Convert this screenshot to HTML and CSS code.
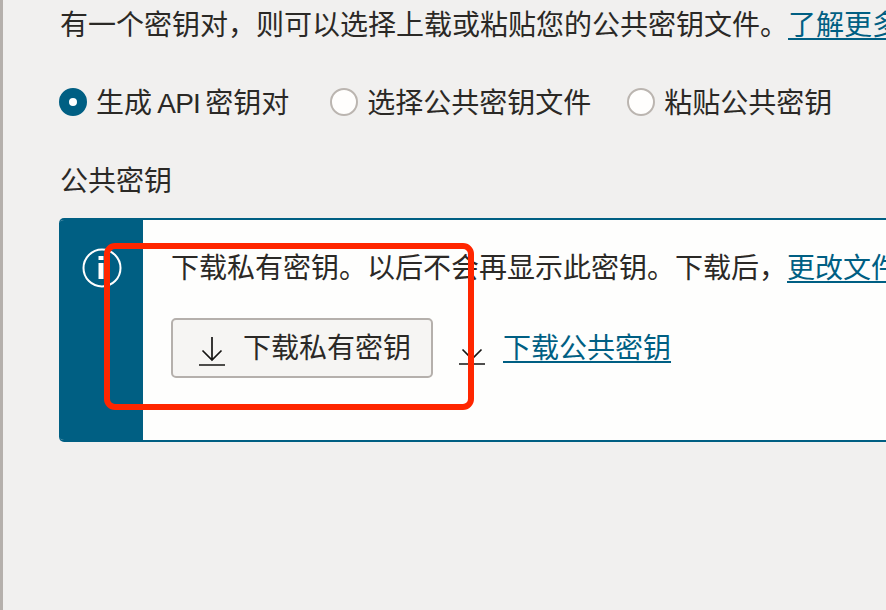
FILE: index.html
```html
<!DOCTYPE html>
<html lang="zh-CN">
<head>
<meta charset="utf-8">
<title>API 密钥</title>
<link rel="stylesheet" href="styles.css">
</head>
<body>
<div class="page">
  <span class="tick tick-a"></span>
  <span class="tick tick-b"></span>
  <main class="content">
    <p class="intro">有一个密钥对，则可以选择上载或粘贴您的公共密钥文件。<a class="link" href="#">了解更多信息</a></p>
    <div class="radios">
      <label class="radio radio-first"><span class="dot dot-on"></span><span class="radio-text">生成 <span class="latin">API</span> 密钥对</span></label>
      <label class="radio"><span class="dot"></span><span class="radio-text">选择公共密钥文件</span></label>
      <label class="radio"><span class="dot"></span><span class="radio-text">粘贴公共密钥</span></label>
    </div>
    <div class="field-label">公共密钥</div>
    <section class="banner">
      <div class="banner-side">
        <svg class="info" viewBox="0 0 40 40" aria-hidden="true">
          <circle cx="20" cy="20" r="18.500" fill="none" stroke="#fff" stroke-width="2"/>
          <rect x="16.500" y="8" width="5" height="4" fill="#fff"/>
          <rect x="16.500" y="15" width="5" height="16" fill="#fff"/>
        </svg>
      </div>
      <div class="banner-body">
        <p class="banner-text">下载私有密钥。以后不会再显示此密钥。下载后，<a class="link" href="#">更改文件权限</a></p>
        <div class="actions">
          <button class="btn" type="button">
            <svg class="dl" viewBox="0 0 26 30" aria-hidden="true"><path d="M13 1V24M3.500 14.500L13 24L22.500 14.500M0 29H26" fill="none" stroke="#161513" stroke-width="1.700"/></svg>
            <span class="btn-text">下载私有密钥</span>
          </button>
          <span class="dl-link">
            <svg class="dl" viewBox="0 0 26 30" aria-hidden="true"><path d="M13 1V24M3.500 14.500L13 24L22.500 14.500M0 29H26" fill="none" stroke="#161513" stroke-width="1.700"/></svg>
            <a class="link" href="#">下载公共密钥</a>
          </span>
        </div>
      </div>
    </section>
  </main>
  <div class="highlight"></div>
</div>
</body>
</html>
```
FILE: styles.css
```css
* { box-sizing: border-box; }
html, body { margin: 0; height: 100%; }
body {
  overflow: hidden;
  background: #f1f0ef;
  color: #2b2926;
  font-family: "Liberation Sans", "Noto Sans CJK SC", sans-serif;
  font-size: 28px;
  line-height: 40px;
}
.page {
  position: relative;
  height: 610px;
  width: 886px;
  overflow: hidden;
  border-left: 3px solid #b5b0ac;
}
.tick {
  position: absolute;
  left: -3px;
  width: 1px;
  height: 2px;
  background: #85807c;
}
.tick-a { top: 470px; }
.tick-b { top: 572px; }
.content {
  padding: 6px 0 0 57px;
  white-space: nowrap;
}
.intro { margin: 0; }
.link {
  color: #005f83;
  text-decoration: underline;
  text-decoration-thickness: 2px;
  text-underline-offset: 3px;
}
.radios {
  display: flex;
  gap: 36px;
  margin-top: 34px;
  margin-left: -1px;
}
.radio { display: flex; align-items: center; gap: 9px; }
.radio-first { margin-right: 5px; word-spacing: -2.500px; }
.latin { letter-spacing: -0.800px; }
.radio-text { padding-top: 4px; }
.dot {
  width: 28px;
  height: 28px;
  border-radius: 50%;
  border: 2px solid #bbb5b0;
  background: #fffefd;
  flex: none;
}
.dot-on {
  border: 10px solid #005f83;
  background: #fff;
}
.field-label { margin-top: 38px; }
.banner {
  display: flex;
  width: 900px;
  height: 224px;
  margin-top: 16px;
  margin-left: -1px;
  background: #fefefd;
  border-top: 2px solid #005f83;
  border-bottom: 2px solid #005f83;
  border-radius: 5px 0 0 5px;
  overflow: hidden;
}
.banner-side {
  flex: none;
  width: 84px;
  margin: -2px 0;
  padding: 30px 0 0 23px;
  background: #005f83;
}
.info { display: block; width: 40px; height: 40px; }
.banner-body { padding: 29px 0 0 28px; }
.banner-text { margin: 0; }
.actions {
  display: flex;
  align-items: center;
  gap: 26px;
  margin-top: 29px;
}
.btn {
  display: flex;
  align-items: center;
  gap: 18px;
  width: 262px;
  height: 60px;
  padding: 0 0 0 26px;
  border: 2px solid #b5b0ac;
  border-radius: 5px;
  background: #f6f5f3;
  color: inherit;
  font: inherit;
}
.btn-text { padding-top: 2px; }
.dl { display: block; width: 26px; height: 30px; flex: none; }
.btn .dl { margin-top: 6px; }
.dl-link { display: flex; align-items: center; gap: 18px; }
.dl-link .dl { margin-top: 4px; }
.dl-link .link { padding-top: 2px; }
.highlight {
  position: absolute;
  left: 101px;
  top: 243px;
  width: 370px;
  height: 167px;
  border: 6px solid #ff2600;
  border-radius: 11px;
}
```
